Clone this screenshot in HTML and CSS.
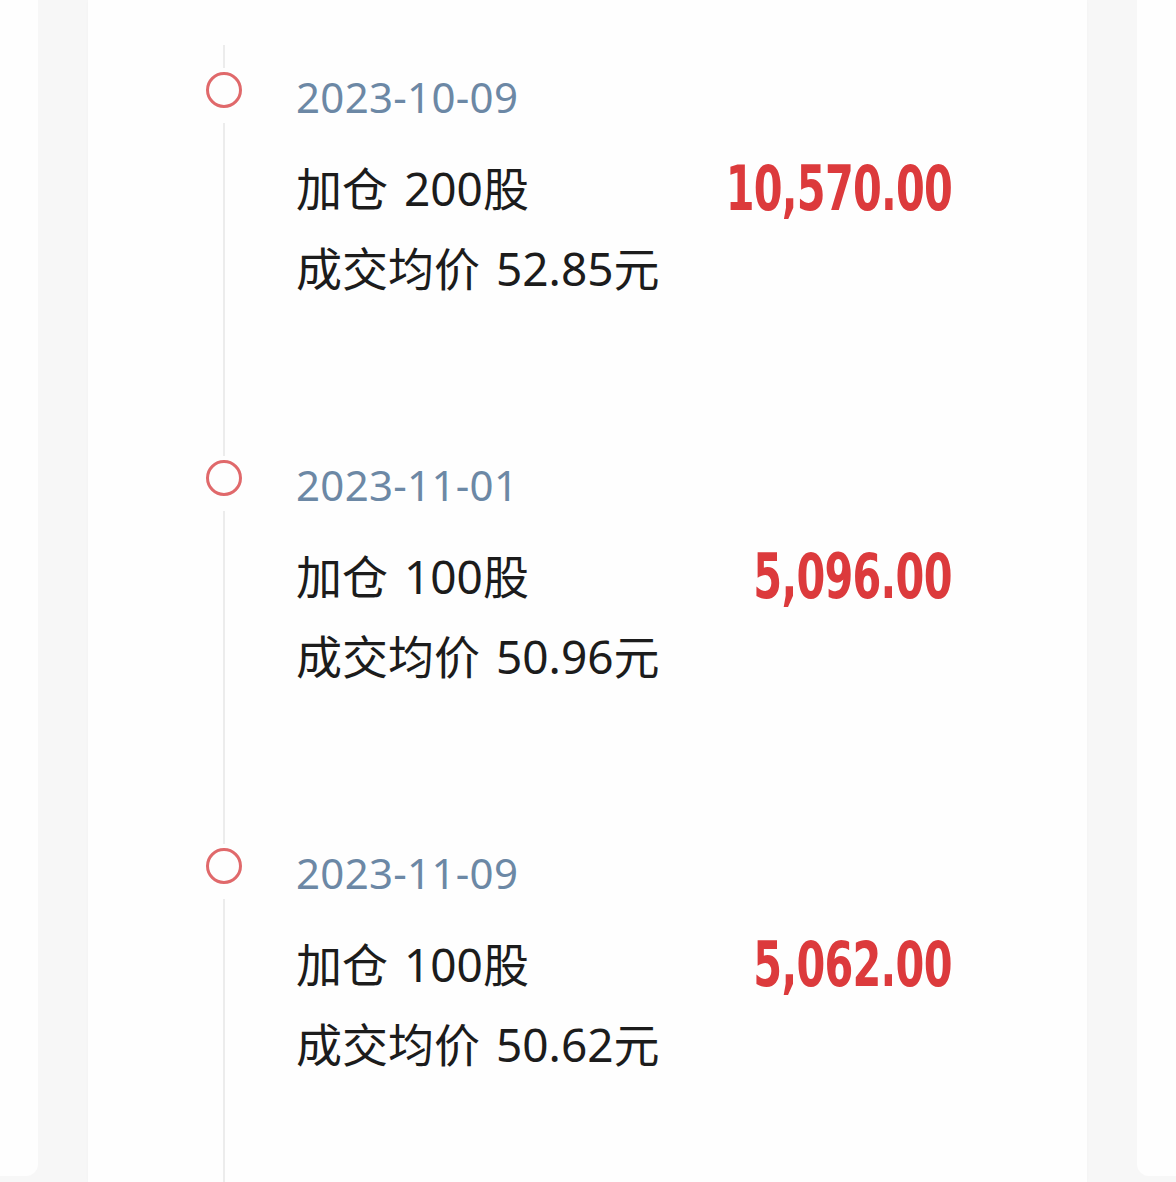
FILE: index.html
```html
<!DOCTYPE html>
<html lang="zh-CN">
<head>
<meta charset="utf-8">
<title>加仓记录</title>
<link rel="stylesheet" href="styles.css">
</head>
<body>
<div class="page">
  <div class="side side-left"></div>
  <main class="card">
    <div class="timeline">
      <div class="item">
        <div class="rail"><span class="dot"></span></div>
        <div class="body">
          <div class="date">2023-10-09</div>
          <div class="row">
            <span class="action">加仓 200股</span>
            <span class="amount">10,570.00</span>
          </div>
          <div class="price">成交均价 52.85元</div>
        </div>
      </div>
      <div class="item">
        <div class="rail"><span class="dot"></span></div>
        <div class="body">
          <div class="date">2023-11-01</div>
          <div class="row">
            <span class="action">加仓 100股</span>
            <span class="amount">5,096.00</span>
          </div>
          <div class="price">成交均价 50.96元</div>
        </div>
      </div>
      <div class="item">
        <div class="rail"><span class="dot"></span></div>
        <div class="body">
          <div class="date">2023-11-09</div>
          <div class="row">
            <span class="action">加仓 100股</span>
            <span class="amount">5,062.00</span>
          </div>
          <div class="price">成交均价 50.62元</div>
        </div>
      </div>
    </div>
  </main>
  <div class="side side-right"></div>
</div>
</body>
</html>
```

FILE: styles.css
```css
html, body {
  margin: 0;
  padding: 0;
}
body {
  background: #f7f7f7;
  width: 1176px;
  height: 1182px;
  overflow: hidden;
  font-family: "Noto Sans", "Noto Sans CJK SC", sans-serif;
  color: #1c1c1c;
}
.page {
  display: flex;
  gap: 50px;
  height: 1182px;
  overflow: hidden;
}
.side {
  background: #fefefe;
  height: 1176px;
}
.side-left {
  width: 38px;
  border-bottom-right-radius: 12px;
}
.side-right {
  width: 39px;
  border-bottom-left-radius: 12px;
}
.card {
  width: 999px;
  height: 1182px;
  overflow: hidden;
  background: #fefefe;
  box-shadow: 0 0 3px rgba(0, 0, 0, 0.025);
}
.timeline {
  position: relative;
  padding: 68px 0 0 118px;
}
.timeline::before {
  content: "";
  position: absolute;
  left: 135px;
  top: 45px;
  bottom: -400px;
  width: 2px;
  background: #ececec;
}
.item {
  display: flex;
  gap: 54px;
  padding-bottom: 148px;
}
.rail {
  position: relative;
  width: 36px;
  padding: 4px 0 15px;
  background: #fefefe;
  align-self: flex-start;
}
.dot {
  display: block;
  width: 30px;
  height: 30px;
  border: 3px solid #e0696b;
  border-radius: 50%;
  background: #fefefe;
}
.body {
  width: 656px;
}
.date {
  margin-top: 4px;
  font-family: "Noto Sans", sans-serif;
  font-size: 42px;
  line-height: 50px;
  color: #6c88a5;
  letter-spacing: 0.3px;
}
.row {
  margin-top: 26px;
  display: flex;
  justify-content: space-between;
  align-items: flex-end;
}
.action, .price {
  font-size: 46px;
  line-height: 80px;
  word-spacing: 4px;
}
.amount {
  display: inline-block;
  font-family: "DejaVu Sans Condensed", "DejaVu Sans", sans-serif;
  font-weight: 700;
  font-size: 63px;
  line-height: 78px;
  letter-spacing: -1px;
  color: #dc3a3c;
  transform: scaleX(0.73);
  transform-origin: right center;
}
```
